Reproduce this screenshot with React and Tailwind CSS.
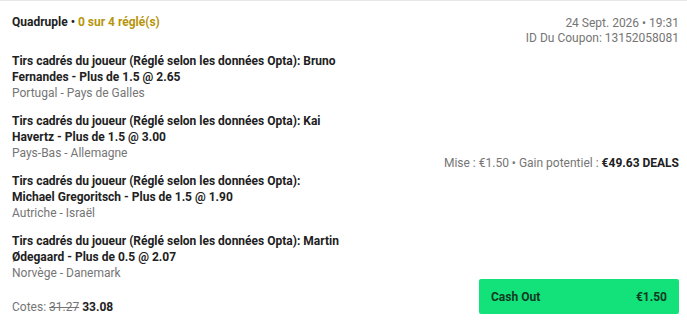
import React from "react";

const legs = [
  {
    title: "Tirs cadrés du joueur (Réglé selon les données Opta): Bruno Fernandes - Plus de 1.5 @ 2.65",
    match: "Portugal - Pays de Galles",
  },
  {
    title: "Tirs cadrés du joueur (Réglé selon les données Opta): Kai Havertz - Plus de 1.5 @ 3.00",
    match: "Pays-Bas - Allemagne",
  },
  {
    title: "Tirs cadrés du joueur (Réglé selon les données Opta): Michael Gregoritsch - Plus de 1.5 @ 1.90",
    match: "Autriche - Israël",
  },
  {
    title: "Tirs cadrés du joueur (Réglé selon les données Opta): Martin Ødegaard - Plus de 0.5 @ 2.07",
    match: "Norvège - Danemark",
  },
];

export default function App() {
  return (
    <div
      className="w-[687px] h-[321px] bg-white border-t border-[#e8e8e8] flex text-[12px] leading-[16px] text-[#212121]"
      style={{ fontFamily: "Roboto, 'Liberation Sans', sans-serif" }}
    >
      <div className="w-[342px] pl-3 pt-[13px] flex flex-col">
        <div className="font-bold">
          Quadruple <span className="text-[#212121]">•</span>{" "}
          <span className="text-[#b7950b]">0 sur 4 réglé(s)</span>
        </div>
        <div className="mt-[23px] flex flex-col gap-3">
          {legs.map((l, i) => (
            <div key={i}>
              <div className="font-bold">{l.title}</div>
              <div className="text-[#757575]">{l.match}</div>
            </div>
          ))}
        </div>
        <div className="mt-[18px] text-[#757575]">
          Cotes: <span className="line-through">31.27</span>{" "}
          <span className="font-bold text-[#212121]">33.08</span>
        </div>
      </div>
      <div className="flex-1 flex flex-col items-end pr-2 pt-[15px] pb-[7px]">
        <div className="text-right text-[#757575] leading-[15px]">
          <div>24 Sept. 2026 • 19:31</div>
          <div>ID Du Coupon: 13152058081</div>
        </div>
        <div className="flex-1 flex items-center">
          <div className="text-[#757575]">
            Mise : €1.50 • Gain potentiel :{" "}
            <span className="font-bold text-[#212121]">€49.63 DEALS</span>
          </div>
        </div>
        <button className="w-[200px] h-[35px] rounded-[2px] bg-[#13e27a] flex items-center justify-between px-3 font-bold text-[#0f3a22]">
          <span>Cash Out</span>
          <span>€1.50</span>
        </button>
      </div>
    </div>
  );
}
